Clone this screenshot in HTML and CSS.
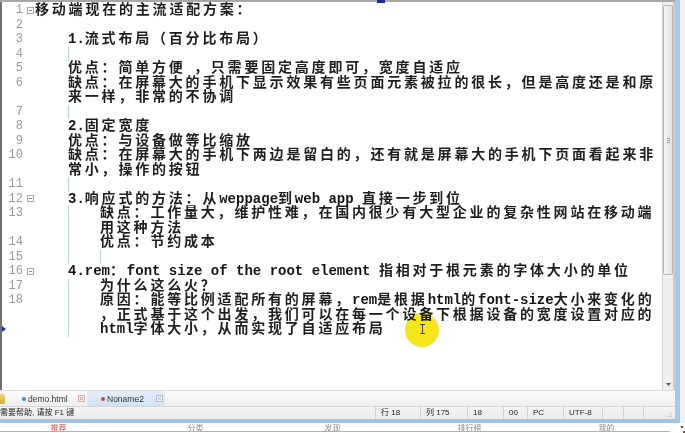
FILE: index.html
```html
<!DOCTYPE html>
<html>
<head>
<meta charset="utf-8">
<link rel="stylesheet" href="styles.css">
</head>
<body>
<div class="screen">
  <div class="upper">
    <div class="frame">
      <div class="editor">
        <div class="lines">
          <div class="row"><span class="num">1</span><span class="fold"><i class="fb"></i></span><span class="txt"><span class="c">移动端现在的主流适配方案：</span></span></div>
          <div class="row"><span class="num">2</span><span class="fold"></span><span class="txt"></span></div>
          <div class="row"><span class="num">3</span><span class="fold"></span><span class="txt i1">1.<span class="c">流式布局（百分比布局）</span></span></div>
          <div class="row"><span class="num">4</span><span class="fold"></span><span class="txt g1"></span></div>
          <div class="row"><span class="num">5</span><span class="fold"></span><span class="txt i1"><span class="c">优点：简单方便</span> <span class="c">，只需要固定高度即可，宽度自适应</span></span></div>
          <div class="row"><span class="num">6</span><span class="fold"></span><span class="txt i1"><span class="c">缺点：在屏幕大的手机下显示效果有些页面元素被拉的很长，但是高度还是和原</span></span></div>
          <div class="row"><span class="num"></span><span class="fold"></span><span class="txt i1"><span class="c">来一样，非常的不协调</span></span></div>
          <div class="row"><span class="num">7</span><span class="fold"></span><span class="txt g1"></span></div>
          <div class="row"><span class="num">8</span><span class="fold"></span><span class="txt i1">2.<span class="c">固定宽度</span></span></div>
          <div class="row"><span class="num">9</span><span class="fold"></span><span class="txt i1"><span class="c">优点：与设备做等比缩放</span></span></div>
          <div class="row"><span class="num">10</span><span class="fold"></span><span class="txt i1"><span class="c">缺点：在屏幕大的手机下两边是留白的，还有就是屏幕大的手机下页面看起来非</span></span></div>
          <div class="row"><span class="num"></span><span class="fold"></span><span class="txt i1"><span class="c">常小，操作的按钮</span></span></div>
          <div class="row"><span class="num">11</span><span class="fold"></span><span class="txt g1"></span></div>
          <div class="row"><span class="num">12</span><span class="fold"><i class="fb"></i></span><span class="txt i1">3.<span class="c">响应式的方法：从</span>weppage<span class="c">到</span>web app <span class="c">直接一步到位</span></span></div>
          <div class="row"><span class="num">13</span><span class="fold"></span><span class="txt i2 g1"><span class="c">缺点：工作量大，维护性难，在国内很少有大型企业的复杂性网站在移动端</span></span></div>
          <div class="row"><span class="num"></span><span class="fold"></span><span class="txt i2 g1"><span class="c">用这种方法</span></span></div>
          <div class="row"><span class="num">14</span><span class="fold"></span><span class="txt i2 g1"><span class="c">优点：节约成本</span></span></div>
          <div class="row"><span class="num">15</span><span class="fold"></span><span class="txt g12"></span></div>
          <div class="row"><span class="num">16</span><span class="fold"><i class="fb"></i></span><span class="txt i1">4.rem<span class="c">：</span>font size of the root element <span class="c">指相对于根元素的字体大小的单位</span></span></div>
          <div class="row"><span class="num">17</span><span class="fold"></span><span class="txt i2 g1"><span class="c">为什么这么火？</span></span></div>
          <div class="row"><span class="num">18</span><span class="fold"></span><span class="txt i2 g1"><span class="c">原因：能等比例适配所有的屏幕，</span>rem<span class="c">是根据</span>html<span class="c">的</span>font-size<span class="c">大小来变化的</span></span></div>
          <div class="row"><span class="num"></span><span class="fold"></span><span class="txt i2 g1"><span class="c">，正式基于这个出发，我们可以在每一个设备下根据设备的宽度设置对应的</span></span></div>
          <div class="row"><span class="num mark-row"><i class="mark"></i></span><span class="fold"></span><span class="txt i2 g1">html<span class="c">字体大小，从而实现了自适应布局</span></span></div>
        </div>
        <div class="vscroll">
          <div class="thumb"><i class="grip"></i></div>
          <svg class="down" width="5" height="3" viewBox="0 0 5 3"><path d="M0 0H5L2.5 3Z" fill="#555"/></svg>
        </div>
      </div>
      <div class="tabs">
        <span class="folder"></span>
        <div class="tab tab1"><i class="dot blue"></i><span>demo.html</span><svg class="close" width="7" height="7" viewBox="0 0 7 7"><rect x="0.5" y="0.5" width="6" height="6" fill="#fbeaea" stroke="#e2a4a4"/><path d="M2 2L5 5M5 2L2 5" stroke="#d77" stroke-width="0.8"/></svg></div>
        <div class="tab tab2"><i class="dot red"></i><span>Noname2</span><svg class="close" width="7" height="7" viewBox="0 0 7 7"><rect x="0.5" y="0.5" width="6" height="6" fill="#eef0f8" stroke="#b9b9d6"/><path d="M2 2L5 5M5 2L2 5" stroke="#a9a9c9" stroke-width="0.8"/></svg></div>
      </div>
      <div class="status">
        <span class="msg">需要帮助, 请按 F1 键</span>
        <span class="cell w45">行 18</span>
        <span class="cell w47">列 175</span>
        <span class="cell w36">18</span>
        <span class="cell w24">00</span>
        <span class="cell w36">PC</span>
        <span class="cell w39">UTF-8</span>
        <span class="cell w21"></span>
        <span class="cell w20"></span>
        <span class="cell w19"></span>
        <span class="cell grip-cell"><svg width="6" height="6" viewBox="0 0 6 6"><g fill="#bbb"><rect x="4" y="0" width="1" height="1"/><rect x="2" y="2" width="1" height="1"/><rect x="4" y="2" width="1" height="1"/><rect x="0" y="4" width="1" height="1"/><rect x="2" y="4" width="1" height="1"/><rect x="4" y="4" width="1" height="1"/></g></svg></span>
      </div>
    </div>
    <div class="outer"></div>
  </div>
  <div class="bottom">
    <div class="nav">
      <span class="red">推荐</span>
      <span>分类</span>
      <span>发现</span>
      <span>排行榜</span>
      <span>我的</span>
    </div>
    <div class="corner"><svg width="4" height="3" viewBox="0 0 4 3"><path d="M0 0H4L2 3Z" fill="#444"/></svg><i class="redblock"></i></div>
  </div>
</div>
<div class="ruler-mark"></div>
<div class="highlight"></div>
<svg class="ibeam" width="5" height="10" viewBox="0 0 5 10"><path d="M0 0.5H5M0 9.5H5M2.5 0.5V9.5" stroke="#444" stroke-width="1"/></svg>
</body>
</html>
```
FILE: styles.css
```css
* { box-sizing: border-box; margin: 0; padding: 0; }
html, body { width: 685px; height: 433px; overflow: hidden; background: #fff; }
body { font-family: "Liberation Sans", "Noto Sans CJK SC", sans-serif; position: relative; }
i { display: block; font-style: normal; }

.screen { display: flex; flex-direction: column; width: 685px; height: 433px; }
.upper { display: flex; height: 423px; }
.frame {
  width: 680px; display: flex; flex-direction: column;
  border-right: 5px solid #a9c8e6; border-bottom: 4px solid #a3c3e3;
}
.outer { width: 5px; background: #eef2f6; }

/* editor */
.editor { height: 390px; display: flex; border-top: 2px solid #a8a8a8; }
.lines { flex: 1; border-left: 2px solid #6f6f6f; padding-top: 1px; }
.row { display: flex; height: 14.5px; }
.num {
  width: 21px; text-align: right; color: #9a9a9a;
  font: 12px/14.5px "Liberation Mono", monospace;
}
.mark-row { display: flex; align-items: center; }
.mark { width: 0; height: 0; border-left: 4px solid #1d2f9c; border-top: 3px solid transparent; border-bottom: 3px solid transparent; }
.fold { width: 12px; display: flex; align-items: center; }
.fb { width: 7px; height: 7px; margin-left: 4px; border: 1px solid #a9a9a9; position: relative; background: #fff; }
.fb::after { content: ""; position: absolute; left: 1px; right: 1px; top: 2px; height: 1px; background: #8a8a8a; }
.txt {
  flex: 1; white-space: pre; color: #151515;
  font: bold 14px/14.5px "Liberation Mono", "Noto Sans CJK SC", monospace;
}
.c { font-weight: 600; letter-spacing: 2.8px; color: #1e1e1e; }
.i1 { padding-left: 33px; }
.i2 { padding-left: 65px; }
.g1 { background: linear-gradient(#b7d3ea, #b7d3ea) no-repeat 33px 0 / 1px 100%; }
.g12 {
  background:
    linear-gradient(#b7d3ea, #b7d3ea) no-repeat 33px 0 / 1px 100%,
    linear-gradient(#b7d3ea, #b7d3ea) no-repeat 65px 0 / 1px 100%;
}

/* scrollbar */
.vscroll {
  width: 13px; background: #efefef;
  border-left: 1px solid #d2d2d2; border-right: 2px solid #cbcbcb;
  display: flex; flex-direction: column; align-items: center; padding-top: 3px;
}
.thumb {
  width: 10px; height: 270px; border: 1px solid #b4b4b4; border-radius: 2px;
  background: linear-gradient(to right, #f7f7f7, #e2e2e2);
  display: flex; align-items: center; justify-content: center;
}
.grip { width: 3px; height: 5px; border-top: 1px solid #9c9c9c; border-bottom: 1px solid #9c9c9c; background: linear-gradient(#9c9c9c, #9c9c9c) no-repeat 0 1px / 3px 1px; }
.down { margin-top: auto; margin-bottom: 4px; }

/* tabs */
.tabs {
  height: 16px; display: flex; align-items: stretch;
  background: linear-gradient(#fbfbfb, #eeeeee); border-top: 1px solid #dcdcdc;
  font-size: 8.5px; color: #333;
}
.folder { width: 5px; margin: 3px 0 2px; background: linear-gradient(#f2d27a, #dcae3c); border-radius: 0 1px 1px 0; }
.tab { display: flex; align-items: center; }
.tab1 { width: 82px; padding-left: 17px; }
.tab2 { width: 78px; padding-left: 14px; background: linear-gradient(#e3eef9, #d2e3f4); }
.dot { width: 4px; height: 4px; border-radius: 50%; margin-right: 2px; }
.dot.blue { background: #4a87c6; }
.dot.red { background: #c9463a; }
.close { margin-left: auto; margin-right: 2px; }

/* status bar */
.status {
  height: 13px; display: flex; align-items: center;
  background: linear-gradient(#f5f5f5, #eaeaea); border-top: 1px solid #d3d3d3;
  font-size: 8px; color: #222; line-height: 12px;
}
.msg { flex: 1; margin-left: 0; white-space: nowrap; }
.cell { height: 100%; border-left: 1px solid #d0d0d0; padding-left: 5px; white-space: nowrap; }
.w45 { width: 45px; }
.w47 { width: 47px; }
.w36 { width: 36px; }
.w24 { width: 24px; }
.w39 { width: 39px; }
.w21 { width: 21px; }
.w20 { width: 20px; }
.w19 { width: 19px; }
.grip-cell { width: 13px; border-left: none; padding: 5px 0 0 5px; }
.grip-cell svg { display: block; }

/* bottom strip */
.bottom { height: 10px; display: flex; }
.nav {
  width: 680px; height: 8px; overflow: hidden; border-bottom: 1px solid #e79a9a;
  box-sizing: content-box;
  display: grid; grid-template-columns: repeat(5, 137px); margin-left: -10px;
  font-size: 8px; line-height: 12px; color: #8a8a8a; text-align: center;
}
.nav .red { color: #e2463c; }
.corner { width: 5px; display: flex; flex-direction: column; align-items: flex-end; padding-top: 3px; margin-left: 10px; }
.corner svg { display: block; margin-right: 1px; }
.redblock { width: 2px; height: 3px; background: #e0201a; margin-top: 2px; }

/* overlays */
.ruler-mark { position: absolute; left: 377px; top: 0; width: 8px; height: 3px; background: #1c2e8e; }
.highlight {
  position: absolute; left: 405px; top: 313px; width: 34px; height: 34px; border-radius: 50%;
  background: radial-gradient(circle, #f5e51a 0 60%, #f1e33e 80%, rgba(241, 227, 62, 0) 100%);
  mix-blend-mode: multiply;
}
.ibeam { position: absolute; left: 420px; top: 324px; }
```
